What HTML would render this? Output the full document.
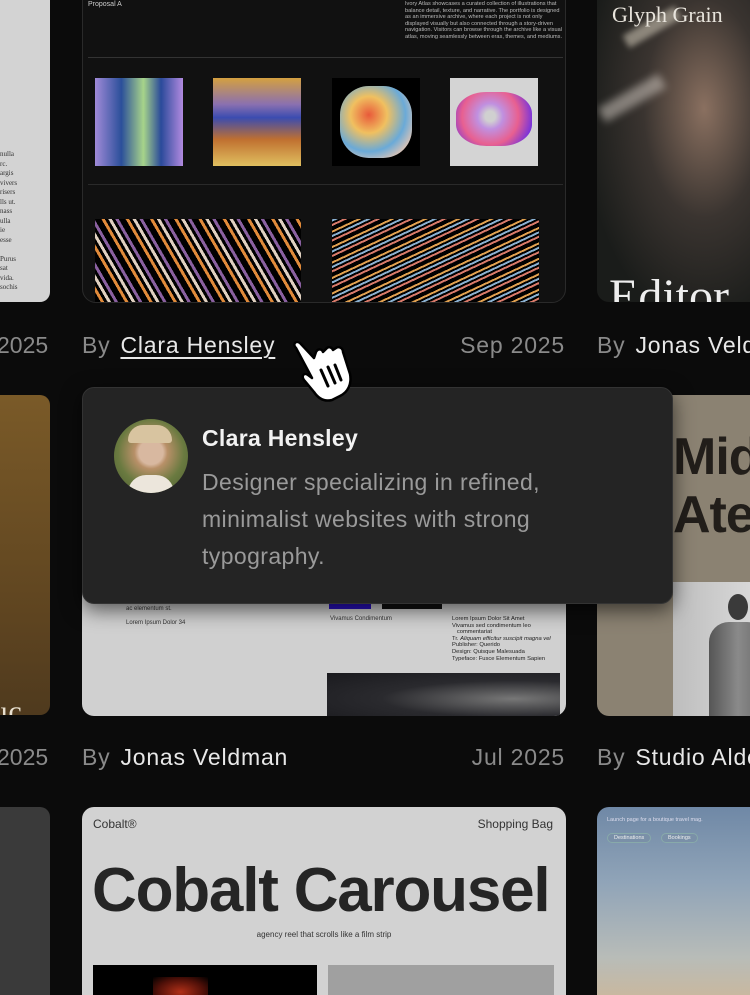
<!DOCTYPE html>
<html><head><meta charset="utf-8">
<style>
*{margin:0;padding:0;box-sizing:border-box}
html,body{width:750px;height:995px;overflow:hidden}
body{background:#0b0b0b;position:relative;font-family:"Liberation Sans",sans-serif}
.abs{position:absolute}
.card{position:absolute;border-radius:12px;overflow:hidden}
.meta{position:absolute;font-size:23px;color:#8a8a8a;letter-spacing:0.8px;white-space:nowrap}
.meta b{font-weight:normal;color:#e8e8e8;margin-left:10px}
.r{text-align:right}
</style></head><body>

<div class="card" style="left:-40px;top:-20px;width:90px;height:322px;background:#d3d3d3;border-radius:0 0 10px 10px">
  <div class="abs" style="left:40px;top:170px;font-family:'Liberation Serif',serif;font-size:7px;line-height:9.5px;color:#333;width:50px">nulla<br>rc.<br>argis<br>vivers<br>risers<br>lls ut.<br>nass<br>ulla<br>ie<br>esse<br><br>Purus<br>sat<br>vida.<br>sochis</div>
</div>
<div class="meta" style="left:-3px;top:332px;letter-spacing:0">2025</div>
<div class="card" style="left:-40px;top:395px;width:90px;height:320px;background:linear-gradient(180deg,#7a5a28,#5e4420 70%,#4f3a1e);border-radius:10px">
  <div class="abs" style="left:40px;top:300px;font-family:'Liberation Serif',serif;font-size:30px;color:#e8e0d0">ıc</div>
</div>
<div class="meta" style="left:-3px;top:744px;letter-spacing:0">2025</div>
<div class="card" style="left:-40px;top:807px;width:90px;height:188px;background:#3a3a3a;border-radius:10px 10px 0 0"></div>

<div class="card" style="left:82px;top:-20px;width:484px;height:323px;background:#111;border:1px solid #2a2a2a;border-radius:0 0 14px 14px">
  <div class="abs" style="left:5px;top:20px;font-size:7px;color:#ccc">Proposal A</div>
  <div class="abs" style="left:322px;top:20px;width:160px;font-size:5.6px;line-height:6.6px;color:#bbb">Ivory Atlas showcases a curated collection of illustrations that balance detail, texture, and narrative. The portfolio is designed as an immersive archive, where each project is not only displayed visually but also connected through a story-driven navigation. Visitors can browse through the archive like a visual atlas, moving seamlessly between eras, themes, and mediums.</div>
  <div class="abs" style="left:5px;top:76px;width:475px;height:1px;background:#333"></div>
  <div class="abs" style="left:12px;top:97px;width:88px;height:88px;background:linear-gradient(90deg,#a08ad8 0%,#2b4f9a 30%,#a7d48a 55%,#2a4a9a 75%,#b28ae0 100%)"></div>
  <div class="abs" style="left:130px;top:97px;width:88px;height:88px;background:linear-gradient(180deg,#d4a040,#8a70b0 30%,#3b4cb0 45%,#c07030 70%,#e0c060)"></div>
  <div class="abs" style="left:249px;top:97px;width:88px;height:88px;background:#000"><div class="abs" style="left:8px;top:8px;width:72px;height:72px;border-radius:40%;background:radial-gradient(circle at 40% 40%,#e85a3a,#f0c060 30%,#6aaad8 60%,#f0c8b0 85%)"></div></div>
  <div class="abs" style="left:367px;top:97px;width:88px;height:88px;background:#d4d4d4"><div class="abs" style="left:6px;top:14px;width:76px;height:54px;border-radius:40%;background:radial-gradient(circle at 45% 45%,#d0d0d0 10%,#c090e0 25%,#e86090 55%,#7030e0 85%)"></div></div>
  <div class="abs" style="left:5px;top:203px;width:475px;height:1px;background:#2a2a2a"></div>
  <div class="abs" style="left:12px;top:238px;width:206px;height:85px;background:repeating-linear-gradient(60deg,#000 0 6px,#e08a3a 6px 9px,#000 9px 12px,#e0d0c0 12px 15px,#000 15px 18px,#8a60a0 18px 21px)"></div>
  <div class="abs" style="left:249px;top:238px;width:207px;height:85px;background:repeating-linear-gradient(-25deg,#000 0 4px,#d87a6a 4px 6px,#000 6px 8px,#8ab0d0 8px 10px,#000 10px 12px,#e0a050 12px 14px)"></div>
</div>
<div class="meta" style="left:82px;top:332px">By<b style="text-decoration:underline;text-underline-offset:4px;text-decoration-thickness:1.5px">Clara Hensley</b></div>
<div class="meta r" style="right:185px;top:332px">Sep 2025</div>

<div class="card" style="left:82px;top:395px;width:484px;height:321px;background:#d0d0d0;border-radius:12px">
  <div class="abs" style="left:44px;top:211px;font-size:6px;color:#333">ac elementum st.</div>
  <div class="abs" style="left:247px;top:208px;width:42px;height:6px;background:#2a10c0"></div>
  <div class="abs" style="left:300px;top:208px;width:60px;height:6px;background:#111"></div>
  <div class="abs" style="left:44px;top:225px;font-size:6px;color:#333">Lorem Ipsum Dolor 34</div>
  <div class="abs" style="left:248px;top:221px;font-size:6px;color:#333">Vivamus Condimentum</div>
  <div class="abs" style="left:370px;top:221px;font-size:5.8px;line-height:6.6px;color:#222">Lorem Ipsum Dolor Sit Amet<br>Vivamus sed condimentum leo<br>&nbsp;&nbsp;&nbsp;commentariat<br>Tr. <i>Aliquam efficitur suscipit magna vel</i><br>Publisher: Querido<br>Design: Quisque Malesuada<br>Typeface: Fusce Elementum Sapien</div>
  <div class="abs" style="left:245px;top:278px;width:233px;height:43px;background:radial-gradient(ellipse at 80% 60%,#777,#2a2a2e 50%,#1a1a1e)"></div>
</div>
<div class="meta" style="left:82px;top:744px">By<b>Jonas Veldman</b></div>
<div class="meta r" style="right:185px;top:744px">Jul 2025</div>

<div class="card" style="left:82px;top:807px;width:484px;height:188px;background:#d2d2d2;border-radius:12px 12px 0 0">
  <div class="abs" style="left:11px;top:10px;font-size:12px;color:#333">Cobalt®</div>
  <div class="abs" style="right:13px;top:10px;font-size:12px;color:#333">Shopping Bag</div>
  <div class="abs" style="left:10px;top:52px;font-size:62px;font-weight:bold;color:#252525;letter-spacing:-1.2px;line-height:64px;white-space:nowrap">Cobalt Carousel</div>
  <div class="abs" style="left:0;width:484px;top:123px;text-align:center;font-size:8px;color:#333">agency reel that scrolls like a film strip</div>
  <div class="abs" style="left:11px;top:158px;width:224px;height:30px;background:#000;overflow:hidden"><div class="abs" style="left:60px;top:12px;width:55px;height:30px;background:radial-gradient(ellipse,#b03018,#501008 60%,#000)"></div></div>
  <div class="abs" style="left:246px;top:158px;width:226px;height:30px;background:#a0a0a0"></div>
</div>

<div class="card" style="left:597px;top:-20px;width:153px;height:322px;background:radial-gradient(ellipse at 70% 40%,#8a7060,#3a3430 40%,#1a1c1a 80%);border-radius:0 0 0 12px">
  <div class="abs" style="left:25px;top:40px;width:60px;height:14px;background:#c8c0b0;opacity:.6;transform:rotate(-30deg);filter:blur(3px)"></div>
  <div class="abs" style="left:0;top:110px;width:70px;height:16px;background:#d8d0c8;opacity:.5;transform:rotate(-30deg);filter:blur(4px)"></div>
  <div class="abs" style="left:15px;top:22px;font-family:'Liberation Serif',serif;font-size:22px;color:#e8e4dc;white-space:nowrap">Glyph Grain</div>
  <div class="abs" style="left:12px;top:292px;font-family:'Liberation Serif',serif;font-size:48px;color:#eee;line-height:50px;white-space:nowrap">Editor</div>
</div>
<div class="abs" style="left:597px;top:320px;width:153px;height:50px;overflow:hidden"><div class="meta" style="left:0;top:12px">By<b>Jonas Veldman</b></div></div>
<div class="card" style="left:597px;top:395px;width:153px;height:321px;background:#8b8272;border-radius:12px 0 0 12px">
  <div class="abs" style="left:76px;top:33px;font-size:52px;font-weight:bold;color:#221e1a;line-height:58px;letter-spacing:-1px;white-space:nowrap">Mid<br>Ate</div>
  <div class="abs" style="left:76px;top:187px;width:77px;height:134px;background:linear-gradient(90deg,#bdbdbd,#d8d8d8);overflow:hidden">
    <div class="abs" style="left:55px;top:12px;width:20px;height:26px;border-radius:50%;background:#3a3a3a"></div>
    <div class="abs" style="left:36px;top:40px;width:58px;height:94px;border-radius:20px 20px 0 0;background:linear-gradient(90deg,#555,#8a8a8a,#666)"></div>
  </div>
</div>
<div class="abs" style="left:597px;top:732px;width:153px;height:50px;overflow:hidden"><div class="meta" style="left:0;top:12px">By<b>Studio Alder</b></div></div>
<div class="card" style="left:597px;top:807px;width:153px;height:188px;background:linear-gradient(180deg,#6f88a6,#90a4b8 40%,#b8bcb8 80%,#c8b8a0);border-radius:12px 0 0 0">
  <div class="abs" style="left:10px;top:10px;font-size:5.5px;color:#dde">Launch page for a boutique travel mag.</div>
  <div class="abs" style="left:10px;top:26px;font-size:5.5px;color:#eee;border:1px solid #8aa;background:#7a90a8;border-radius:6px;padding:1px 6px">Destinations</div>
  <div class="abs" style="left:64px;top:26px;font-size:5.5px;color:#eee;border:1px solid #8aa;background:#7a90a8;border-radius:6px;padding:1px 6px">Bookings</div>
</div>

<div class="abs" style="left:82px;top:387px;width:591px;height:217px;background:#242424;border:1px solid #333;border-radius:12px;box-shadow:0 6px 20px rgba(0,0,0,.6)">
  <div class="abs" style="left:31px;top:31px;width:74px;height:74px;border-radius:50%;background:radial-gradient(circle at 50% 45%,#d8b8a0 0 22%,#b89068 30%,#6a7a40 60%,#4a5a30);overflow:hidden">
    <div class="abs" style="left:14px;top:6px;width:44px;height:18px;border-radius:20px 20px 4px 4px;background:#d8c4a0"></div>
    <div class="abs" style="left:14px;top:56px;width:46px;height:22px;border-radius:18px 18px 0 0;background:#ece6dc"></div>
  </div>
  <div class="abs" style="left:119px;top:37px;font-size:23px;font-weight:bold;color:#f2f2f2;letter-spacing:0.3px">Clara Hensley</div>
  <div class="abs" style="left:119px;top:76px;width:375px;font-size:23px;line-height:37px;color:#9a9a9a;letter-spacing:0.4px">Designer specializing in refined, minimalist websites with strong typography.</div>
</div>

<svg class="abs" style="left:288px;top:338px" width="72" height="66" viewBox="0 0 72 66">
  <path d="M8 10 C4 6 8 2 12 5 L26 20 L28 14 C30 10 34 11 35 14 L38 11 C40 8 44 9 45 12 L48 10 C51 8 55 10 55 14 L62 36 C64 46 60 54 52 58 L44 62 C36 64 30 60 26 54 L16 42 C13 38 16 34 20 37 L24 40 Z" fill="#fff" stroke="#000" stroke-width="2.5" stroke-linejoin="round"/>
  <path d="M33 32 L40 48 M40 29 L47 45 M47 27 L53 42" stroke="#000" stroke-width="3" stroke-linecap="round"/>
</svg>

</body></html>
